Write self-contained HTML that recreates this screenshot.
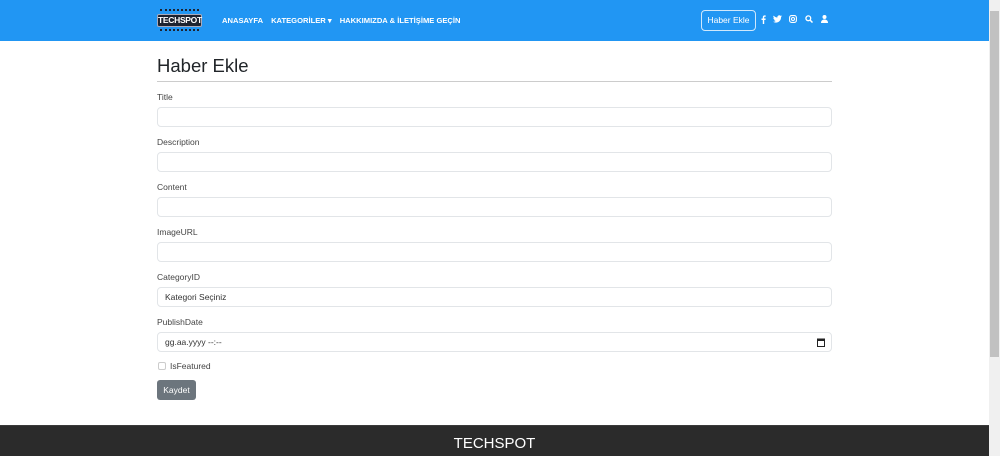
<!DOCTYPE html>
<html><head><meta charset="utf-8">
<style>
*{box-sizing:border-box;margin:0;padding:0}
body{width:1000px;height:456px;overflow:hidden;background:#fff;font-family:"Liberation Sans",Arial,sans-serif;position:relative;color:#212529}
.nav{position:absolute;left:0;top:0;width:989px;height:41px;background:#2196f3}
.logo{position:absolute;left:157px;top:7px;width:45px;height:27px}
.logo .box{position:absolute;left:0;top:7px;width:45px;height:13px;background:#1d2330;border:1px solid #aab;border-radius:2px;color:#fff;font-size:8.5px;font-weight:bold;line-height:11px;text-align:center;letter-spacing:-.3px}
.logo .d1,.logo .d2{position:absolute;left:3px;width:39px;height:4px;border-top:2px dotted #1d2330}
.logo .d1{top:2px}.logo .d2{top:22px}
.links{position:absolute;left:222px;top:16px;font-size:7.6px;font-weight:bold;color:#fff;white-space:nowrap}
.links span{margin-right:8px}
.btnh{position:absolute;left:701px;top:10px;width:55px;height:21px;border:1px solid #cfe8fc;border-radius:4px;color:#fff;font-size:8.5px;line-height:19px;text-align:center}
.ic{position:absolute;top:15px}
h1{position:absolute;left:157px;top:55px;font-size:18.5px;font-weight:normal;color:#212529}
.hr{position:absolute;left:157px;top:81px;width:675px;height:1px;background:#ccc}
label{position:absolute;left:157px;font-size:8.5px;color:#444}
.inp{position:absolute;left:157px;width:675px;height:20px;border:1px solid #e2e5e8;border-radius:4px;font-size:8.5px;color:#333;padding-left:7px;line-height:18px}
.cb{position:absolute;left:158px;top:362px;width:8px;height:8px;border:1px solid #ccc;border-radius:2px}
.kay{position:absolute;left:157px;top:380px;width:39px;height:20px;background:#6c757d;border-radius:3px;color:#fff;font-size:8.5px;line-height:20px;text-align:center}
.foot{position:absolute;left:0;top:425px;width:989px;height:31px;background:#2b2b2b;border-top:1px solid #3a3a3a;color:#fff;font-size:15px;text-align:center;line-height:36px}
.sb{position:absolute;left:989px;top:0;width:11px;height:456px;background:#f0f0f0}
.th{position:absolute;left:990px;top:11px;width:9px;height:346px;background:#c1c1c1}
</style></head><body>
<div class="nav">
 <div class="logo"><div class="d1"></div><div class="box">TECHSPOT</div><div class="d2"></div></div>
 <div class="links"><span>ANASAYFA</span><span>KATEGORİLER ▾</span><span>HAKKIMIZDA &amp; İLETİŞİME GEÇİN</span></div>
 <div class="btnh">Haber Ekle</div>
 <svg class="ic" style="left:761px" width="5" height="9" viewBox="0 0 5 9"><path d="M3.2 9V5h1.3l.2-1.5H3.2v-1c0-.4.1-.7.7-.7h.8V.5C4.5.4 4.1.4 3.6.4 2.5.4 1.8 1 1.8 2.2v1.3H.5V5h1.3v4z" fill="#fff"/></svg>
 <svg class="ic" style="left:773px" width="9" height="8" viewBox="0 0 24 20"><path d="M24 2.4a10 10 0 0 1-2.8.8A5 5 0 0 0 23.3.4a10 10 0 0 1-3.1 1.2A4.9 4.9 0 0 0 11.8 6 14 14 0 0 1 1.7.9a4.9 4.9 0 0 0 1.5 6.6A4.9 4.9 0 0 1 1 6.9a4.9 4.9 0 0 0 3.9 4.8 5 5 0 0 1-2.2.1 4.9 4.9 0 0 0 4.6 3.4A9.9 9.9 0 0 1 0 17.3 14 14 0 0 0 7.5 19.5c9.1 0 14-7.5 14-14v-.6A10 10 0 0 0 24 2.4z" fill="#fff"/></svg>
 <svg class="ic" style="left:789px" width="8" height="8" viewBox="0 0 8 8"><rect x=".6" y=".6" width="6.8" height="6.8" rx="2" fill="none" stroke="#fff" stroke-width="1.1"/><circle cx="4" cy="4" r="1.5" fill="none" stroke="#fff" stroke-width="1.1"/></svg>
 <svg class="ic" style="left:805px" width="8" height="8" viewBox="0 0 8 8"><circle cx="3.3" cy="3.3" r="2.4" fill="none" stroke="#fff" stroke-width="1.3"/><path d="M5 5l2.5 2.5" stroke="#fff" stroke-width="1.5"/></svg>
 <svg class="ic" style="left:821px" width="7" height="8" viewBox="0 0 7 8"><circle cx="3.5" cy="2" r="2" fill="#fff"/><path d="M0 8c0-2.5 1.5-3.5 3.5-3.5S7 5.5 7 8z" fill="#fff"/></svg>
</div>
<h1>Haber Ekle</h1>
<div class="hr"></div>
<label style="top:92px">Title</label><div class="inp" style="top:107px"></div>
<label style="top:137px">Description</label><div class="inp" style="top:152px"></div>
<label style="top:182px">Content</label><div class="inp" style="top:197px"></div>
<label style="top:227px">ImageURL</label><div class="inp" style="top:242px"></div>
<label style="top:272px">CategoryID</label><div class="inp" style="top:287px">Kategori Seçiniz</div>
<label style="top:317px">PublishDate</label><div class="inp" style="top:332px">gg.aa.yyyy --:--
 <svg style="position:absolute;right:6px;top:5px" width="8" height="9" viewBox="0 0 8 9"><rect x=".5" y="1" width="7" height="7.5" fill="none" stroke="#222"/><rect x=".5" y="1" width="7" height="2" fill="#222"/></svg></div>
<div class="cb"></div><label style="top:361px;left:170px">IsFeatured</label>
<div class="kay">Kaydet</div>
<div class="foot">TECHSPOT</div>
<div class="sb"></div><div class="th"></div>
</body></html>
